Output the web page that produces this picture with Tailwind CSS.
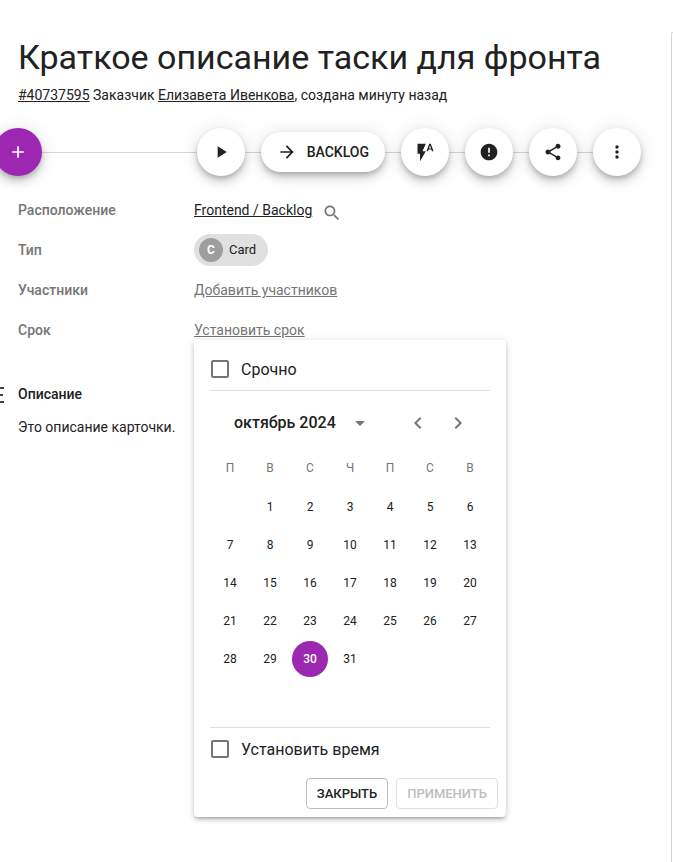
<!DOCTYPE html>
<html lang="ru">
<head>
<meta charset="utf-8">
<meta name="viewport" content="width=device-width, initial-scale=1">
<title>Краткое описание таски для фронта</title>
<script src="https://cdn.jsdelivr.net/npm/@tailwindcss/browser@4"></script>
</head>
<body class="flex min-h-screen overflow-x-hidden bg-white font-['Roboto',sans-serif] text-sm leading-5 text-[#212121]">
<main class="min-w-0 flex-1 pt-9 pl-[18px]">
  <h1 class="text-[34px] leading-[42px]">Краткое описание таски для фронта</h1>
  <p class="mt-[7px]"><a href="#card" class="underline">#40737595</a> Заказчик <a href="#owner" class="underline">Елизавета Ивенкова</a>, создана минуту назад</p>

  <div class="relative mt-[23px] -ml-6 flex items-center gap-4 pr-[30px]">
    <div class="absolute inset-x-6 top-6 right-12 border-t border-[#d8d8d8]"></div>
    <button aria-label="Добавить" class="relative mr-auto flex size-12 shrink-0 items-center justify-center rounded-full bg-[#9c27b0] text-white shadow-[0_3px_5px_-1px_rgba(0,0,0,.2),0_6px_10px_rgba(0,0,0,.14),0_1px_18px_rgba(0,0,0,.12)]">
      <svg class="size-5" viewBox="0 0 24 24" fill="currentColor"><path d="M19 13h-6v6h-2v-6H5v-2h6V5h2v6h6v2z"/></svg>
    </button>
    <button aria-label="Запустить" class="relative flex size-12 shrink-0 items-center justify-center rounded-full bg-white shadow-[0_3px_5px_-1px_rgba(0,0,0,.2),0_6px_10px_rgba(0,0,0,.14),0_1px_18px_rgba(0,0,0,.12)]">
      <svg class="size-5" viewBox="0 0 24 24" fill="currentColor"><path d="M8 5v14l11-7z"/></svg>
    </button>
    <button class="relative flex h-10 shrink-0 items-center gap-[10px] rounded-full bg-white px-4 font-medium shadow-[0_3px_5px_-1px_rgba(0,0,0,.2),0_6px_10px_rgba(0,0,0,.14),0_1px_18px_rgba(0,0,0,.12)]">
      <svg class="size-5" viewBox="0 0 24 24" fill="currentColor"><path d="m12 4-1.410 1.410L16.170 11H4v2h12.170l-5.580 5.590L12 20l8-8z"/></svg>
      BACKLOG
    </button>
    <button aria-label="Автоматизация" class="relative flex size-12 shrink-0 items-center justify-center rounded-full bg-white shadow-[0_3px_5px_-1px_rgba(0,0,0,.2),0_6px_10px_rgba(0,0,0,.14),0_1px_18px_rgba(0,0,0,.12)]">
      <svg class="size-5" viewBox="0 0 24 24" fill="currentColor"><path d="M3 2v12h3v9l7-12H9l4-9H3zm16 0h-2l-3.200 9h1.900l.7-2h3.200l.7 2h1.900L19 2zm-2.150 5.650L18 4l1.150 3.650h-2.300z"/></svg>
    </button>
    <button aria-label="Важно" class="relative flex size-12 shrink-0 items-center justify-center rounded-full bg-white shadow-[0_3px_5px_-1px_rgba(0,0,0,.2),0_6px_10px_rgba(0,0,0,.14),0_1px_18px_rgba(0,0,0,.12)]">
      <svg class="size-5" viewBox="0 0 24 24" fill="currentColor"><path d="M12 2C6.480 2 2 6.480 2 12s4.480 10 10 10 10-4.480 10-10S17.520 2 12 2zm1 15h-2v-2h2v2zm0-4h-2V7h2v6z"/></svg>
    </button>
    <button aria-label="Поделиться" class="relative flex size-12 shrink-0 items-center justify-center rounded-full bg-white shadow-[0_3px_5px_-1px_rgba(0,0,0,.2),0_6px_10px_rgba(0,0,0,.14),0_1px_18px_rgba(0,0,0,.12)]">
      <svg class="size-5" viewBox="0 0 24 24" fill="currentColor"><path d="M18 16.080c-.76 0-1.440.3-1.960.77L8.910 12.700c.05-.23.09-.46.09-.7s-.04-.47-.09-.7l7.050-4.110c.54.5 1.250.81 2.040.81 1.660 0 3-1.340 3-3s-1.340-3-3-3-3 1.340-3 3c0 .24.040.47.090.7L8.040 9.810C7.500 9.310 6.790 9 6 9c-1.660 0-3 1.340-3 3s1.340 3 3 3c.79 0 1.500-.31 2.040-.81l7.120 4.160c-.05.21-.08.43-.08.65 0 1.610 1.310 2.920 2.920 2.920s2.920-1.310 2.920-2.920-1.310-2.920-2.920-2.920z"/></svg>
    </button>
    <button aria-label="Ещё" class="relative flex size-12 shrink-0 items-center justify-center rounded-full bg-white shadow-[0_3px_5px_-1px_rgba(0,0,0,.2),0_6px_10px_rgba(0,0,0,.14),0_1px_18px_rgba(0,0,0,.12)]">
      <svg class="size-5" viewBox="0 0 24 24" fill="currentColor"><path d="M12 8c1.100 0 2-.9 2-2s-.9-2-2-2-2 .9-2 2 .9 2 2 2zm0 2c-1.100 0-2 .9-2 2s.9 2 2 2 2-.9 2-2-.9-2-2-2zm0 6c-1.100 0-2 .9-2 2s.9 2 2 2 2-.9 2-2-.9-2-2-2z"/></svg>
    </button>
  </div>

  <dl class="mt-[14px] grid auto-rows-[40px] grid-cols-[176px_1fr] items-center">
    <dt class="font-medium text-[#757575]">Расположение</dt>
    <dd class="flex items-center gap-[10px]"><a href="#board" class="underline">Frontend / Backlog</a>
      <button aria-label="Найти" class="pt-[6px] text-[#757575]"><svg class="size-5" viewBox="0 0 24 24" fill="currentColor"><path d="M15.500 14h-.79l-.28-.27C15.410 12.590 16 11.110 16 9.500 16 5.910 13.090 3 9.500 3S3 5.910 3 9.500 5.910 16 9.500 16c1.610 0 3.090-.59 4.230-1.570l.27.28v.79l5 4.990L20.490 19l-4.990-5zm-6 0C7.010 14 5 11.990 5 9.500S7.010 5 9.500 5 14 7.010 14 9.500 11.990 14 9.500 14z"/></svg></button>
    </dd>
    <dt class="font-medium text-[#757575]">Тип</dt>
    <dd><button class="flex h-8 items-center gap-[6px] rounded-full bg-[#e0e0e0] pr-3 pl-[5px] text-[13px]"><span class="flex size-6 items-center justify-center rounded-full bg-[#9e9e9e] text-xs font-bold text-white">C</span>Card</button></dd>
    <dt class="font-medium text-[#757575]">Участники</dt>
    <dd><a href="#members" class="text-[#757575] underline">Добавить участников</a></dd>
    <dt class="font-medium text-[#757575]">Срок</dt>
    <dd class="relative"><a href="#due" class="text-[#757575] underline">Установить срок</a>
      <div role="dialog" aria-label="Срок" class="absolute top-full left-0 z-10 w-[312px] rounded bg-white pt-4 pb-2 shadow-[0_3px_3px_-2px_rgba(0,0,0,.2),0_3px_4px_rgba(0,0,0,.14),0_1px_8px_rgba(0,0,0,.12)]">
        <label class="mx-4 flex h-[35px] items-start gap-3 border-b border-[#e0e0e0] pl-px text-base leading-7"><input type="checkbox" class="mt-1 size-[18px] appearance-none rounded-[2px] border-2 border-[#757575]">Срочно</label>
        <div class="mx-4 flex h-16 items-center pr-3 pl-6">
          <button class="mr-auto flex items-center gap-3 text-base font-medium">октябрь 2024<svg class="size-6 text-[#757575]" viewBox="0 0 24 24" fill="currentColor"><path d="m7 10 5 5 5-5z"/></svg></button>
          <button aria-label="Предыдущий месяц" class="flex size-10 items-center justify-center text-[#757575]"><svg class="size-6" viewBox="0 0 24 24" fill="currentColor"><path d="M15.410 7.410 14 6l-6 6 6 6 1.410-1.410L10.830 12z"/></svg></button>
          <button aria-label="Следующий месяц" class="flex size-10 items-center justify-center text-[#757575]"><svg class="size-6" viewBox="0 0 24 24" fill="currentColor"><path d="M10 6 8.590 7.410 13.170 12l-4.580 4.590L10 18l6-6z"/></svg></button>
        </div>
        <div class="mx-4 h-[273px] border-b border-[#e0e0e0]">
          <table class="w-full table-fixed text-center text-xs">
            <thead><tr class="h-[33px] text-[#757575]"><th class="p-0 pb-2 font-normal">П</th><th class="p-0 pb-2 font-normal">В</th><th class="p-0 pb-2 font-normal">С</th><th class="p-0 pb-2 font-normal">Ч</th><th class="p-0 pb-2 font-normal">П</th><th class="p-0 pb-2 font-normal">С</th><th class="p-0 pb-2 font-normal">В</th></tr></thead>
            <tbody id="days"></tbody>
          </table>
        </div>
        <label class="mx-4 mt-2 flex items-start gap-3 pl-px text-base leading-7"><input type="checkbox" class="mt-1 size-[18px] appearance-none rounded-[2px] border-2 border-[#757575]">Установить время</label>
        <div class="mt-[14px] flex justify-end gap-2 px-2 text-[13px] font-medium">
          <button class="h-[31px] rounded border border-[#bdbdbd] px-[10px]">ЗАКРЫТЬ</button>
          <button disabled class="h-[31px] rounded border border-[#e0e0e0] px-[10px] text-[#bdbdbd]">ПРИМЕНИТЬ</button>
        </div>
      </div>
    </dd>
  </dl>

  <section class="mt-[34px]">
    <div class="-ml-[34px] flex items-center gap-[14px]">
      <svg class="size-5 text-[#424242]" viewBox="0 0 20 20" fill="currentColor"><path d="M3 3h17v2H3zM3 10h16v2H3zM3 17h17v2H3z"/></svg>
      <h2 class="font-medium">Описание</h2>
    </div>
    <p class="mt-[13px]">Это описание карточки.</p>
  </section>
</main>
<aside class="mt-8 w-[2px] shrink-0 rounded-tl border-t border-l border-[#d5d5d5]"></aside>
<script>
  // October 2024 starts on a Tuesday; the week starts on Monday.
  const days = document.getElementById('days');
  for (let start = 0; start <= 28; start += 7) {
    const row = days.insertRow();
    for (let i = start; i < start + 7; i++) {
      const cell = row.insertCell();
      cell.className = 'h-[38px] p-0';
      if (i < 1 || i > 31) continue;
      const button = document.createElement('button');
      button.textContent = i;
      button.className = i === 30
        ? 'size-9 rounded-full bg-[#9c27b0] font-medium text-white'
        : 'size-9 rounded-full';
      cell.append(button);
    }
  }
</script>
</body>
</html>
